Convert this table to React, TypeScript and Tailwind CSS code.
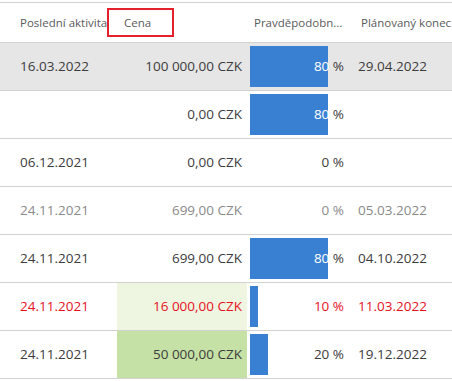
import React from 'react';

type Row = {
  activity: string;
  price: string;
  pct: number;
  end: string;
  tone?: 'muted' | 'red';
  selected?: boolean;
  priceBg?: string;
};

const rows: Row[] = [
  { activity: '16.03.2022', price: '100 000,00 CZK', pct: 80, end: '29.04.2022', selected: true },
  { activity: '', price: '0,00 CZK', pct: 80, end: '' },
  { activity: '06.12.2021', price: '0,00 CZK', pct: 0, end: '' },
  { activity: '24.11.2021', price: '699,00 CZK', pct: 0, end: '05.03.2022', tone: 'muted' },
  { activity: '24.11.2021', price: '699,00 CZK', pct: 80, end: '04.10.2022' },
  { activity: '24.11.2021', price: '16 000,00 CZK', pct: 10, end: '11.03.2022', tone: 'red', priceBg: 'bg-[#eef5e1]' },
  { activity: '24.11.2021', price: '50 000,00 CZK', pct: 20, end: '19.12.2022', priceBg: 'bg-[#c6e1a5]' },
];

const cols = 'grid grid-cols-[117px_130px_103px_1fr]';

// bar with the label on top; digits under the bar turn white
const Percent: React.FC<{ pct: number }> = ({ pct }) => {
  const barWidth = pct > 0 ? pct - 2 : 0;
  const covered = barWidth > 60;
  return (
    <div className="relative h-full w-[97px]">
      {barWidth > 0 && <div className="h-full bg-[#3a80d2]" style={{ width: barWidth }} />}
      <div className="absolute inset-0 flex items-center justify-end pr-[3px]">
        <span>
          <span className={covered ? 'text-white' : ''}>{pct}</span>&nbsp;%
        </span>
      </div>
    </div>
  );
};

export default function App() {
  return (
    <div className="h-[381px] w-[452px] overflow-hidden bg-white pt-[2px] font-['Open_Sans',sans-serif]">
      <div className={`${cols} h-[41px] items-center border-y border-[#d2d2d2] text-[11.5px] text-[#5a5a5a]`}>
        <div className="pl-[20px] whitespace-nowrap">Poslední aktivita</div>
        <div className="flex">
          <div className="ml-[-10px] flex h-[29px] w-[67px] items-center border-2 border-[#e3202b] pl-[15px]">Cena</div>
        </div>
        <div className="pl-[7px] whitespace-nowrap">Pravděpodobn...</div>
        <div className="pl-[11px] whitespace-nowrap">Plánovaný konec</div>
      </div>
      {rows.map((r, i) => {
        const color = r.tone === 'red' ? 'text-[#e8101e]' : r.tone === 'muted' ? 'text-[#8a8a8a]' : 'text-[#3c3c3c]';
        return (
          <div
            key={i}
            className={`${cols} h-[48px] border-b border-[#d2d2d2] text-[13.5px] ${color} ${r.selected ? 'bg-[#e6e6e6]' : ''}`}
          >
            <div className="flex items-center pl-[20px]">{r.activity}</div>
            <div className={`flex items-center justify-end pr-[5px] ${r.priceBg ?? ''}`}>{r.price}</div>
            <div className="px-[3px] py-[3px]">
              <Percent pct={r.pct} />
            </div>
            <div className="flex items-center pl-[8px]">{r.end}</div>
          </div>
        );
      })}
    </div>
  );
}
